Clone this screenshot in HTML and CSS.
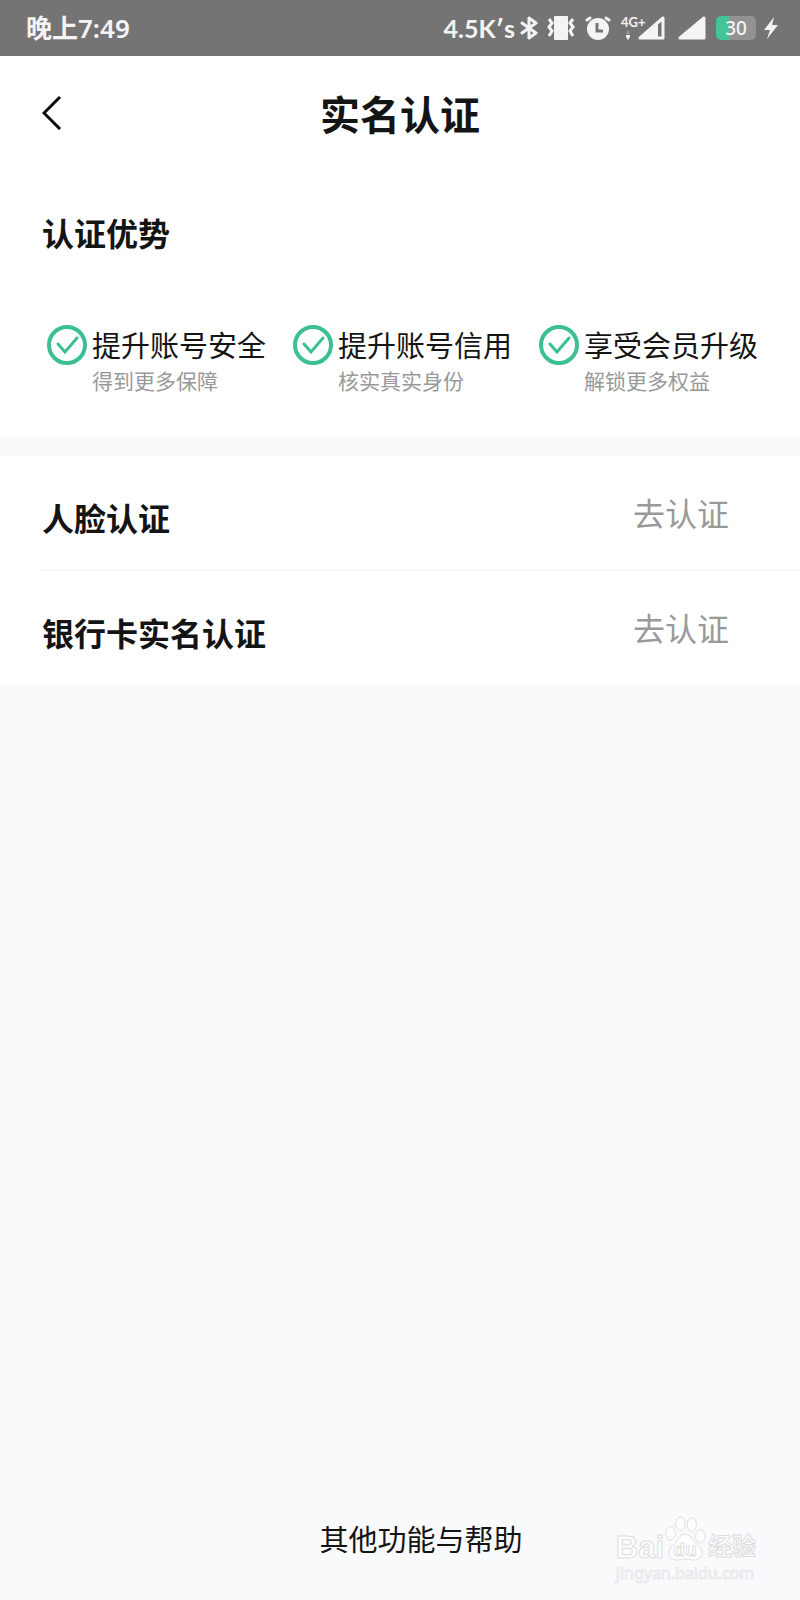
FILE: index.html
```html
<!DOCTYPE html>
<html lang="zh-CN">
<head>
    <meta charset="UTF-8">
    <meta name="viewport" content="width=device-width, initial-scale=1.0">
    <title>实名认证</title>
    <link rel="stylesheet" href="styles.css">
</head>
<body>
    <div class="status-bar">
        <span class="time">晚上7:49</span>
        <div class="status-icons">
            <span class="speed">4.5K′s</span>
            <svg class="bluetooth" width="18" height="24" viewBox="0 0 18 24" fill="none" stroke="#f4f4f4" stroke-width="3" stroke-linejoin="round" stroke-linecap="round">
                <path d="M2 7l14 10-7 5V2l7 5L2 17"/>
            </svg>
            <svg class="vibrate" width="28" height="24" viewBox="0 0 28 24">
                <rect x="7" y="0" width="14" height="24" rx="1" fill="#f4f4f4"/>
                <path d="M2 3l3 4-3 4 3 4-3 5M26 3l-3 4 3 4-3 4 3 5" fill="none" stroke="#f4f4f4" stroke-width="3"/>
            </svg>
            <svg class="alarm" width="26" height="24" viewBox="0 0 26 24">
                <circle cx="13" cy="13" r="11" fill="#f4f4f4"/>
                <path d="M2 4l3-2M24 4l-3-2" stroke="#f4f4f4" stroke-width="3" stroke-linecap="round"/>
                <path d="M12 7v8h6" fill="none" stroke="#747474" stroke-width="3"/>
            </svg>
            <div class="network">
                <span>4G+</span>
                <svg width="6" height="10" viewBox="0 0 6 10">
                    <path d="M3 0l2 4H1z" fill="#999"/>
                    <path d="M1 5h4v2L3 10 1 7z" fill="#f4f4f4"/>
                </svg>
            </div>
            <svg class="signal-one" width="28" height="24" viewBox="0 0 28 24">
                <path d="M26 2v20H3z" fill="none" stroke="#f4f4f4" stroke-width="3" stroke-linejoin="round"/>
                <path d="M2 22L21 5v17z" fill="#f4f4f4"/>
            </svg>
            <svg class="signal-two" width="29" height="24" viewBox="0 0 29 24">
                <path d="M27 2v20H3z" fill="#f4f4f4" stroke="#f4f4f4" stroke-width="3" stroke-linejoin="round"/>
            </svg>
            <div class="battery"><span>30</span></div>
            <svg class="charge" width="14" height="22" viewBox="0 0 14 22">
                <path d="M10 0L0 13h6L3 22 14 8H8z" fill="#f4f4f4"/>
            </svg>
        </div>
    </div>

    <header class="header">
        <button class="back-btn" aria-label="返回">
            <svg width="20" height="34" viewBox="0 0 20 34" fill="none" stroke="#0c0c0c" stroke-width="3">
                <path d="M18 1L2 17l16 16"/>
            </svg>
        </button>
        <h1>实名认证</h1>
    </header>

    <section class="benefits">
        <h2>认证优势</h2>
        <ul class="benefit-list">
            <li>
                <svg width="40" height="40" viewBox="0 0 40 40" fill="none" stroke="#3cc093" stroke-width="4">
                    <circle cx="20" cy="20" r="18"/>
                    <path d="M11 19l7 8 12-14" stroke-width="3" stroke-linecap="round"/>
                </svg>
                <div>
                    <h3>提升账号安全</h3>
                    <p>得到更多保障</p>
                </div>
            </li>
            <li>
                <svg width="40" height="40" viewBox="0 0 40 40" fill="none" stroke="#3cc093" stroke-width="4">
                    <circle cx="20" cy="20" r="18"/>
                    <path d="M11 19l7 8 12-14" stroke-width="3" stroke-linecap="round"/>
                </svg>
                <div>
                    <h3>提升账号信用</h3>
                    <p>核实真实身份</p>
                </div>
            </li>
            <li>
                <svg width="40" height="40" viewBox="0 0 40 40" fill="none" stroke="#3cc093" stroke-width="4">
                    <circle cx="20" cy="20" r="18"/>
                    <path d="M11 19l7 8 12-14" stroke-width="3" stroke-linecap="round"/>
                </svg>
                <div>
                    <h3>享受会员升级</h3>
                    <p>解锁更多权益</p>
                </div>
            </li>
        </ul>
    </section>

    <main class="verify-list">
        <div class="verify-item">
            <h2>人脸认证</h2>
            <a href="#face">去认证</a>
        </div>
        <div class="verify-item">
            <h2>银行卡实名认证</h2>
            <a href="#bank">去认证</a>
        </div>
    </main>

    <footer class="footer">
        <a href="#help">其他功能与帮助</a>
    </footer>

    <div class="watermark">
        <div class="logo">
            <span class="logo-bai">Bai</span>
            <svg width="42" height="48" viewBox="0 0 44 48" fill="#fdfdfe" stroke="#dcdddf">
                <ellipse cx="7" cy="18" rx="5" ry="7"/>
                <ellipse cx="17" cy="8" rx="5" ry="7"/>
                <ellipse cx="29" cy="9" rx="5" ry="7"/>
                <ellipse cx="38" cy="21" rx="5" ry="7"/>
                <path d="M22 19c-6 0-7 6-11 10-4 3-6 6-6 10 0 5 4 7 9 7 4 0 5-1 8-1s5 1 9 1c5 0 9-2 9-8 0-4-4-7-7-10-3-4-5-9-11-9z"/>
                <text x="22" y="42" text-anchor="middle" class="logo-du">du</text>
            </svg>
            <span class="logo-cn">经验</span>
        </div>
        <div class="domain">jingyan.baidu.com</div>
    </div>
</body>
</html>
```
FILE: styles.css
```css
body {
    margin: 0;
    min-height: 100vh;
    display: flex;
    flex-direction: column;
    position: relative;
    background-color: #f9fafc;
    color: #141414;
    font-family: "Noto Sans CJK SC", sans-serif;
}

h1, h2, h3, p, ul {
    margin: 0;
    padding: 0;
}

a {
    text-decoration: none;
}

/* Status bar */
.status-bar {
    height: 56px;
    box-sizing: border-box;
    padding: 0 22px 0 26px;
    display: flex;
    justify-content: space-between;
    align-items: center;
    background-color: #747474;
    color: #f4f4f4;
    font-family: Lato, "Noto Sans CJK SC", sans-serif;
    font-size: 25px;
    font-weight: 700;
}

.time {
    font-family: "Noto Sans", "Noto Sans CJK SC", sans-serif;
    font-size: 26px;
    line-height: 36px;
    font-weight: 600;
}

.status-icons {
    display: flex;
    align-items: center;
}

.speed {
    margin-right: 5px;
}

.vibrate {
    margin-left: 9px;
}

.alarm {
    margin-left: 10px;
}

.network {
    margin-left: 10px;
    height: 26px;
    width: 16px;
    font-size: 13px;
    line-height: 14px;
    display: flex;
    flex-direction: column;
    gap: 1px;
}

.network svg {
    margin-left: 4px;
}

.signal-two {
    margin-left: 12px;
}

.battery {
    margin-left: 10px;
    width: 40px;
    height: 24px;
    border-radius: 5px;
    background: linear-gradient(to right, #45c596 34%, #929292 34%);
    font-family: "Noto Sans", sans-serif;
    font-size: 19px;
    font-weight: 500;
    line-height: 24px;
    text-align: center;
}

.charge {
    margin-left: 8px;
}

/* Title bar */
.header {
    height: 114px;
    padding: 0 42px;
    display: grid;
    grid-template-columns: 1fr auto 1fr;
    align-items: center;
    background-color: #fff;
}

.header h1 {
    font-size: 40px;
    line-height: 56px;
    font-weight: 700;
}

.back-btn {
    justify-self: start;
    display: flex;
    padding: 0;
    border: none;
    background: none;
    cursor: pointer;
}

h2 {
    font-size: 32px;
    line-height: 48px;
    font-weight: 700;
}

/* Benefits */
.benefits {
    padding: 38px 42px 42px;
    background-color: #fff;
}

.benefits h2 {
    margin-bottom: 66px;
}

.benefit-list {
    display: flex;
    justify-content: space-between;
    list-style: none;
    padding-left: 5px;
}

.benefit-list li {
    display: flex;
    gap: 5px;
}

.benefit-list svg {
    margin-top: 3px;
}

.benefit-list h3 {
    font-size: 29px;
    line-height: 44px;
    font-weight: 400;
    white-space: nowrap;
}

.benefit-list p {
    font-size: 21px;
    line-height: 28px;
    color: #999;
}

/* Verification rows */
.verify-list {
    margin-top: 20px;
    padding-left: 42px;
    background-color: #fff;
}

.verify-item {
    padding: 34px 71px 28px 0;
    display: flex;
    justify-content: space-between;
    align-items: flex-start;
}

.verify-item + .verify-item {
    border-top: 2px solid #f6f6f7;
}

.verify-item h2 {
    padding-top: 3px;
}

.verify-item a {
    font-size: 32px;
    line-height: 44px;
    color: #999;
}

/* Footer */
.footer {
    margin-top: auto;
    padding: 0 0 40px 42px;
    text-align: center;
}

.footer a {
    color: #141414;
    font-size: 29px;
    line-height: 44px;
}

.watermark {
    position: absolute;
    right: 44px;
    bottom: 17px;
    color: #fdfdfe;
    -webkit-text-stroke: 1px #dcdddf;
}

.logo {
    display: flex;
    align-items: flex-end;
}

.logo-bai {
    font-family: "Liberation Sans", sans-serif;
    font-size: 31px;
    line-height: 30px;
    font-weight: 700;
}

.logo-du {
    font-family: "Liberation Sans", sans-serif;
    font-size: 20px;
    font-weight: 700;
}

.logo-cn {
    margin-left: 2px;
    font-size: 24px;
    line-height: 36px;
    font-weight: 700;
}

.domain {
    font-family: "Noto Sans", sans-serif;
    font-size: 16px;
    line-height: 20px;
    -webkit-text-stroke: 1px #e8e9eb;
}
```
